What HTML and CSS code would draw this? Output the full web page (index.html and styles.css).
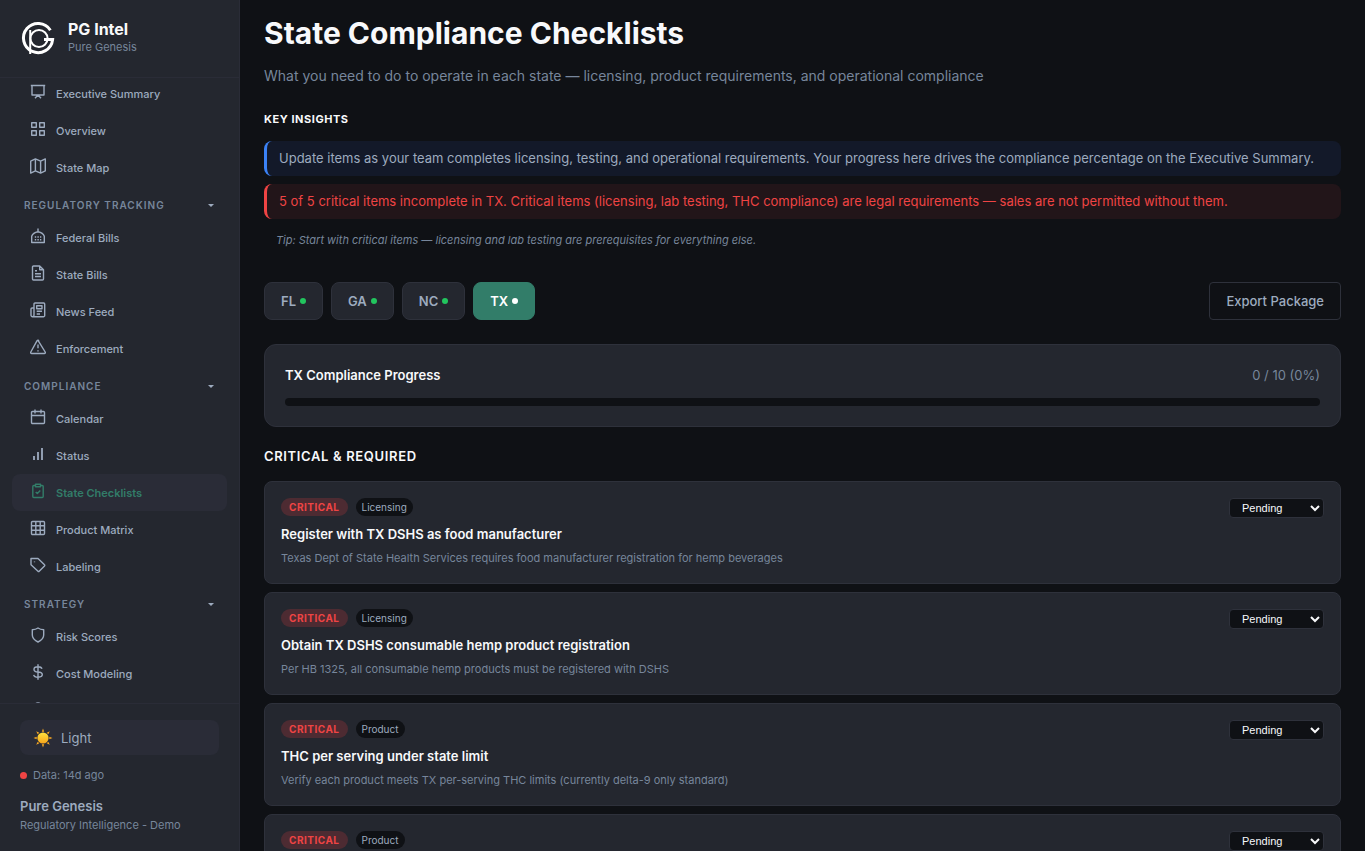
FILE: index.html
```html
<!DOCTYPE html>
<html lang="en">
<head>
    <meta charset="UTF-8">
    <meta name="viewport" content="width=device-width, initial-scale=1.0">
    <title>State Compliance Checklists - PG Intel</title>
    <link rel="stylesheet" href="styles.css">
</head>
<body>

    <aside class="sidebar">
        <div class="brand">
            <svg class="brand-logo" viewBox="0 0 36 36" aria-hidden="true">
                <path d="M30.4 9.2A14.6 14.6 0 1 0 32.6 18.6H24"/>
                <circle class="thin" cx="19" cy="17.5" r="8.6"/>
                <path class="thin" d="M10.2 9v24"/>
            </svg>
            <div class="brand-text">
                <div class="brand-name">PG Intel</div>
                <div class="brand-sub">Pure Genesis</div>
            </div>
        </div>

        <nav class="nav">
            <div class="nav-scroll">
                <a class="nav-item" href="#"><svg viewBox="0 0 16 16"><path d="M.8 1.500h14.400M2 1.500v9.500h12v-9.500M8 11 5 14.200M8 11l3 3.200"/></svg>Executive Summary</a>
                <a class="nav-item" href="#"><svg viewBox="0 0 16 16"><path d="M1.7 1.7h4.6v4.6H1.7zM9.7 1.7h4.6v4.6H9.7zM1.7 9.7h4.6v4.6H1.7zM9.7 9.7h4.6v4.6H9.7z"/></svg>Overview</a>
                <a class="nav-item" href="#"><svg viewBox="0 0 16 16"><path d="M.7 3.2 5.4.9l5.2 2.3L15.3.9v11.9l-4.7 2.3-5.2-2.3-4.7 2.3zM5.4.9v11.9M10.6 3.2v11.9"/></svg>State Map</a>

                <button class="nav-heading" type="button">Regulatory Tracking <span class="caret"></span></button>
                <a class="nav-item" href="#"><svg viewBox="0 0 16 16"><path d="M8 .5v3.200M1.700 14.500h12.600V8.200C13.500 5.800 11 4.200 8 3.700 5 4.200 2.500 5.800 1.700 8.200z"/><path class="dots" d="M4.800 8.900h6.500M4.800 11.700h6.500"/></svg>Federal Bills</a>
                <a class="nav-item" href="#"><svg viewBox="0 0 16 16"><path d="M9.700 1H3.500a1 1 0 0 0-1 1v12a1 1 0 0 0 1 1h9a1 1 0 0 0 1-1V4.800zM9.700 1v3.800h3.800M5 5.800h2M5 8.700h6M5 11.500h6"/></svg>State Bills</a>
                <a class="nav-item" href="#"><svg viewBox="0 0 16 16"><path d="M2.500 14.700h11a1.200 1.200 0 0 0 1.200-1.200V2a1 1 0 0 0-1-1H5a1 1 0 0 0-1 1v11.200a1.500 1.500 0 0 1-3 0V7a1 1 0 0 1 1-1h2M6.700 3.800h5.300v3H6.700zM6.700 9.300H12M6.700 12H10"/></svg>News Feed</a>
                <a class="nav-item" href="#"><svg viewBox="0 0 16 16"><path d="M8 1.300 15.200 13a1 1 0 0 1-.9 1.500H1.700A1 1 0 0 1 .8 13L7.100 1.700a1 1 0 0 1 1.800 0M8 5.500v3.700M8 11.200v1.300"/></svg>Enforcement</a>

                <button class="nav-heading" type="button">Compliance <span class="caret"></span></button>
                <a class="nav-item" href="#"><svg viewBox="0 0 16 16"><path d="M2.500 2.500h11a1 1 0 0 1 1 1v10a1 1 0 0 1-1 1h-11a1 1 0 0 1-1-1v-10a1 1 0 0 1 1-1zM1.500 6.500h13M5 .5v4M11 .5v4"/></svg>Calendar</a>
                <a class="nav-item" href="#"><svg viewBox="0 0 16 16"><path class="bars" d="M4 10v4M8 6v8M12 2v12"/></svg>Status</a>
                <a class="nav-item active" href="#" aria-current="page"><svg viewBox="0 0 16 16"><path d="M5.500 2.500H3.800a1 1 0 0 0-1 1V13.500a1 1 0 0 0 1 1h8.400a1 1 0 0 0 1-1V3.500a1 1 0 0 0-1-1h-1.700M5.500 1.200h5v2.600h-5zM5.700 9l1.600 1.600 3-3.200"/></svg>State Checklists</a>
                <a class="nav-item" href="#"><svg viewBox="0 0 16 16"><path d="M2.500 1.500h11a1 1 0 0 1 1 1v11a1 1 0 0 1-1 1h-11a1 1 0 0 1-1-1v-11a1 1 0 0 1 1-1zM1.500 5.800h13M1.500 10.200h13M5.800 1.500v13M10.200 1.500v13"/></svg>Product Matrix</a>
                <a class="nav-item" href="#"><svg viewBox="0 0 16 16"><path d="M1 1.500h7l6.500 6.300a.8.8 0 0 1 0 1.200l-5.300 5.300a.8.8 0 0 1-1.200 0L1 7.800zM4.500 4.500v.7"/></svg>Labeling</a>

                <button class="nav-heading" type="button">Strategy <span class="caret"></span></button>
                <a class="nav-item" href="#"><svg viewBox="0 0 16 16"><path d="M8 1c1.700 1.200 3.500 1.700 5.700 1.800V8c0 3-2 5.200-5.700 7-3.700-1.800-5.700-4-5.700-7V2.800C4.500 2.700 6.300 2.200 8 1z"/></svg>Risk Scores</a>
                <a class="nav-item" href="#"><svg viewBox="0 0 16 16"><path d="M8 .3v15.400M12 4.800C11.500 3.400 10.300 2.800 8 2.800S4 3.600 4 5.400 5.500 7.800 8 8s4.300.8 4.300 2.600-1.600 2.600-4.300 2.600-4-.8-4.300-2.300"/></svg>Cost Modeling</a>
                <a class="nav-item" href="#" aria-label="Partners"><svg viewBox="0 0 16 16"><circle cx="8" cy="5" r="3"/><path d="M2 15c0-3 2.500-5 6-5s6 2 6 5"/></svg></a>
            </div>
        </nav>

        <div class="sidebar-footer">
            <button class="theme-toggle" type="button">
                <svg viewBox="0 0 20 20" aria-hidden="true">
                    <defs>
                        <linearGradient id="sun" x1="0" y1="0" x2="0" y2="1">
                            <stop offset="0" stop-color="#ffe23d"/>
                            <stop offset="1" stop-color="#f8a51b"/>
                        </linearGradient>
                    </defs>
                    <path fill="#f5a623" d="M10 .5l1.200 3.200H8.800zM10 19.500l1.200-3.200H8.800zM.5 10l3.200-1.200v2.400zM19.500 10l-3.200-1.200v2.400zM3.200 3.200l3.100 1.500-1.600 1.600zM16.800 3.200l-1.500 3.100-1.600-1.600zM3.200 16.800l1.500-3.100 1.600 1.600zM16.800 16.800l-3.100-1.500 1.600-1.600z"/>
                    <circle cx="10" cy="10" r="5.600" fill="url(#sun)"/>
                </svg>
                Light
            </button>
            <div class="data-age"><span class="status-dot"></span>Data: 14d ago</div>
            <div class="org-name">Pure Genesis</div>
            <div class="org-sub">Regulatory Intelligence - Demo</div>
        </div>
    </aside>

    <main class="main">
        <h1>State Compliance Checklists</h1>
        <p class="subtitle">What you need to do to operate in each state — licensing, product requirements, and operational compliance</p>

        <section class="insights">
            <h2>Key Insights</h2>
            <div class="insight info">Update items as your team completes licensing, testing, and operational requirements. Your progress here drives the compliance percentage on the Executive Summary.</div>
            <div class="insight danger">5 of 5 critical items incomplete in TX. Critical items (licensing, lab testing, THC compliance) are legal requirements — sales are not permitted without them.</div>
            <p class="tip">Tip: Start with critical items — licensing and lab testing are prerequisites for everything else.</p>
        </section>

        <div class="toolbar">
            <button class="tab" type="button">FL <span class="dot"></span></button>
            <button class="tab" type="button">GA <span class="dot"></span></button>
            <button class="tab" type="button">NC <span class="dot"></span></button>
            <button class="tab active" type="button">TX <span class="dot"></span></button>
            <button class="export" type="button">Export Package</button>
        </div>

        <section class="progress-card">
            <div class="progress-head">
                <span class="progress-title">TX Compliance Progress</span>
                <span class="progress-count">0 / 10 (0%)</span>
            </div>
            <div class="progress-bar"></div>
        </section>

        <h2 class="list-title">Critical &amp; Required</h2>
        <div class="checklist">
            <article class="check-item">
                <div class="check-body">
                    <div class="badges"><span class="badge critical">Critical</span><span class="badge category">Licensing</span></div>
                    <h3>Register with TX DSHS as food manufacturer</h3>
                    <p>Texas Dept of State Health Services requires food manufacturer registration for hemp beverages</p>
                </div>
                <select class="status-select" aria-label="Status: Register with TX DSHS as food manufacturer">
                    <option>Pending</option>
                    <option>In Progress</option>
                    <option>Complete</option>
                </select>
            </article>
            <article class="check-item">
                <div class="check-body">
                    <div class="badges"><span class="badge critical">Critical</span><span class="badge category">Licensing</span></div>
                    <h3>Obtain TX DSHS consumable hemp product registration</h3>
                    <p>Per HB 1325, all consumable hemp products must be registered with DSHS</p>
                </div>
                <select class="status-select" aria-label="Status: Obtain TX DSHS consumable hemp product registration">
                    <option>Pending</option>
                    <option>In Progress</option>
                    <option>Complete</option>
                </select>
            </article>
            <article class="check-item">
                <div class="check-body">
                    <div class="badges"><span class="badge critical">Critical</span><span class="badge category">Product</span></div>
                    <h3>THC per serving under state limit</h3>
                    <p>Verify each product meets TX per-serving THC limits (currently delta-9 only standard)</p>
                </div>
                <select class="status-select" aria-label="Status: THC per serving under state limit">
                    <option>Pending</option>
                    <option>In Progress</option>
                    <option>Complete</option>
                </select>
            </article>
            <article class="check-item">
                <div class="check-body">
                    <div class="badges"><span class="badge critical">Critical</span><span class="badge category">Product</span></div>
                </div>
                <select class="status-select" aria-label="Status">
                    <option>Pending</option>
                    <option>In Progress</option>
                    <option>Complete</option>
                </select>
            </article>
        </div>
    </main>

</body>
</html>
```

FILE: styles.css
```css
:root {
    --bg: #0f1115;
    --surface: #24272f;
    --raised: #2a2c37;
    --border: #2e313b;
    --text: #f8f9fb;
    --text-2: #9dabbf;
    --muted: #77869b;
    --green: #327d69;
    --red: #ef4444;
}
* { box-sizing: border-box; margin: 0; padding: 0; }
body {
    display: flex; height: 100vh; overflow: hidden;
    font-family: Inter, "Liberation Sans", sans-serif;
    font-size: 13px; background: var(--bg); color: var(--text);
}
button { font-family: inherit; cursor: pointer; border: none; }
a { text-decoration: none; }

/* Sidebar */
.sidebar {
    flex: none; width: 240px; display: flex; flex-direction: column;
    background: var(--surface); border-right: 1px solid var(--raised);
}
.brand {
    display: flex; align-items: center; gap: 12px;
    height: 78px; padding: 0 20px; border-bottom: 1px solid var(--raised);
}
.brand-logo { width: 36px; height: 36px; fill: none; stroke: #fff; stroke-width: 3; }
.brand-logo .thin { stroke-width: 2; }
.brand-text { padding-bottom: 4px; }
.brand-name { font-size: 16px; font-weight: 700; line-height: 20px; }
.brand-sub { font-size: 11px; line-height: 16px; color: var(--muted); }

.nav { flex: 1; min-height: 0; overflow: hidden; padding: 0 12px; }
.nav-scroll { margin-top: -3px; }
.nav-item {
    display: flex; align-items: center; gap: 10px;
    height: 37px; padding: 0 18px; border-radius: 8px;
    font-size: 11px; font-weight: 500; color: var(--text-2);
}
.nav-item svg {
    width: 16px; height: 16px; margin-bottom: 4px;
    fill: none; stroke: currentColor; stroke-width: 1.4; stroke-linejoin: round;
}
.nav-item .dots { stroke-dasharray: 1.4 1.2; stroke-width: 1.5; }
.nav-item .bars { stroke-width: 1.8; }
.nav-item.active { background: var(--raised); color: var(--green); font-weight: 600; }
.nav-heading {
    display: flex; justify-content: space-between; align-items: center;
    width: 100%; padding: 12px 13px 6px 12px; background: none;
    font-size: 10px; font-weight: 600; line-height: 15px; letter-spacing: 1px;
    text-transform: uppercase; color: var(--muted);
}
.caret { border: 3px solid transparent; border-top-color: var(--text-2); border-bottom: none; }

.sidebar-footer { padding: 16px 20px; border-top: 1px solid var(--raised); }
.theme-toggle {
    display: flex; align-items: center; gap: 8px;
    width: 100%; height: 35px; padding: 0 13px; border-radius: 8px;
    background: var(--raised); color: var(--text-2); font-size: 13px;
}
.theme-toggle svg { width: 20px; height: 20px; }
.data-age {
    display: flex; align-items: center; gap: 6px;
    margin-top: 11px; font-size: 11px; line-height: 18px; color: var(--muted);
}
.status-dot { width: 7px; height: 7px; border-radius: 50%; background: var(--red); }
.org-name { margin-top: 12px; font-weight: 600; line-height: 20px; color: var(--text-2); }
.org-sub { margin-bottom: 1px; font-size: 11px; line-height: 18px; color: var(--muted); }

/* Main */
.main { flex: 1; min-width: 0; overflow: hidden; padding: 12px 24px 0; }
h1 { font-size: 30px; font-weight: 700; line-height: 42px; }
.subtitle { margin-top: 12px; font-size: 14px; line-height: 20px; color: var(--muted); }
h2 { font-size: 11px; font-weight: 700; line-height: 18px; letter-spacing: 0.05em; text-transform: uppercase; }
.insights { margin-top: 24px; }
.insights h2 { margin-bottom: 13px; }
.insight {
    margin-bottom: 8px; padding: 8px 12px; border-left: 3px solid;
    border-radius: 8px; font-size: 13px; line-height: 19px;
}
.insight.info { background: #131929; border-color: #3b82f6; color: var(--text-2); }
.insight.danger { background: #221519; border-color: var(--red); color: var(--red); }
.tip { padding-left: 12px; font-size: 11px; font-style: italic; line-height: 26px; color: var(--muted); }

.toolbar { display: flex; gap: 8px; margin-top: 29px; }
.tab, .export {
    display: flex; align-items: center; gap: 4px;
    height: 38px; padding: 0 16px; border: 1px solid var(--border);
    border-radius: 8px; background: var(--surface);
    font-size: 13px; font-weight: 600; color: var(--text-2);
}
.dot { width: 6px; height: 6px; border-radius: 50%; background: #22c55e; }
.tab.active { background: var(--green); border-color: var(--green); color: #fff; }
.tab.active .dot { background: #fff; }
.export { margin-left: auto; border-radius: 4px; background: none; font-weight: 500; }

.progress-card {
    margin-top: 24px; padding: 20px;
    background: var(--surface); border: 1px solid var(--border); border-radius: 12px;
}
.progress-head { display: flex; justify-content: space-between; line-height: 20px; }
.progress-title { font-weight: 600; }
.progress-count { color: var(--muted); }
.progress-bar { height: 8px; margin-top: 13px; border-radius: 4px; background: var(--bg); }

.list-title { margin: 20px 0 16px; font-size: 13px; font-weight: 600; }
.check-item {
    display: flex; justify-content: space-between; align-items: flex-start;
    min-height: 103px; margin-bottom: 8px; padding: 16px 16px 15px;
    background: var(--surface); border: 1px solid var(--border); border-radius: 8px;
}
.badges { display: flex; gap: 8px; }
.badge { padding: 0 8px; border-radius: 9px; font-size: 10px; line-height: 18px; }
.badge.critical {
    background: #4d2b32; color: var(--red);
    font-weight: 700; letter-spacing: 0.05em; text-transform: uppercase;
}
.badge.category { padding: 0 6px; background: var(--bg); color: var(--text-2); }
.check-item h3 { margin-top: 8px; font-size: 13px; font-weight: 600; line-height: 20px; }
.check-item p { margin-top: 4px; font-size: 11px; line-height: 20px; color: var(--muted); }
.status-select {
    width: 95px; height: 20px; padding: 0 8px;
    border: 1px solid var(--border); border-radius: 4px;
    background: var(--bg); color: var(--text);
    font-family: "Liberation Sans", Arial, sans-serif; font-size: 11px;
}
```
